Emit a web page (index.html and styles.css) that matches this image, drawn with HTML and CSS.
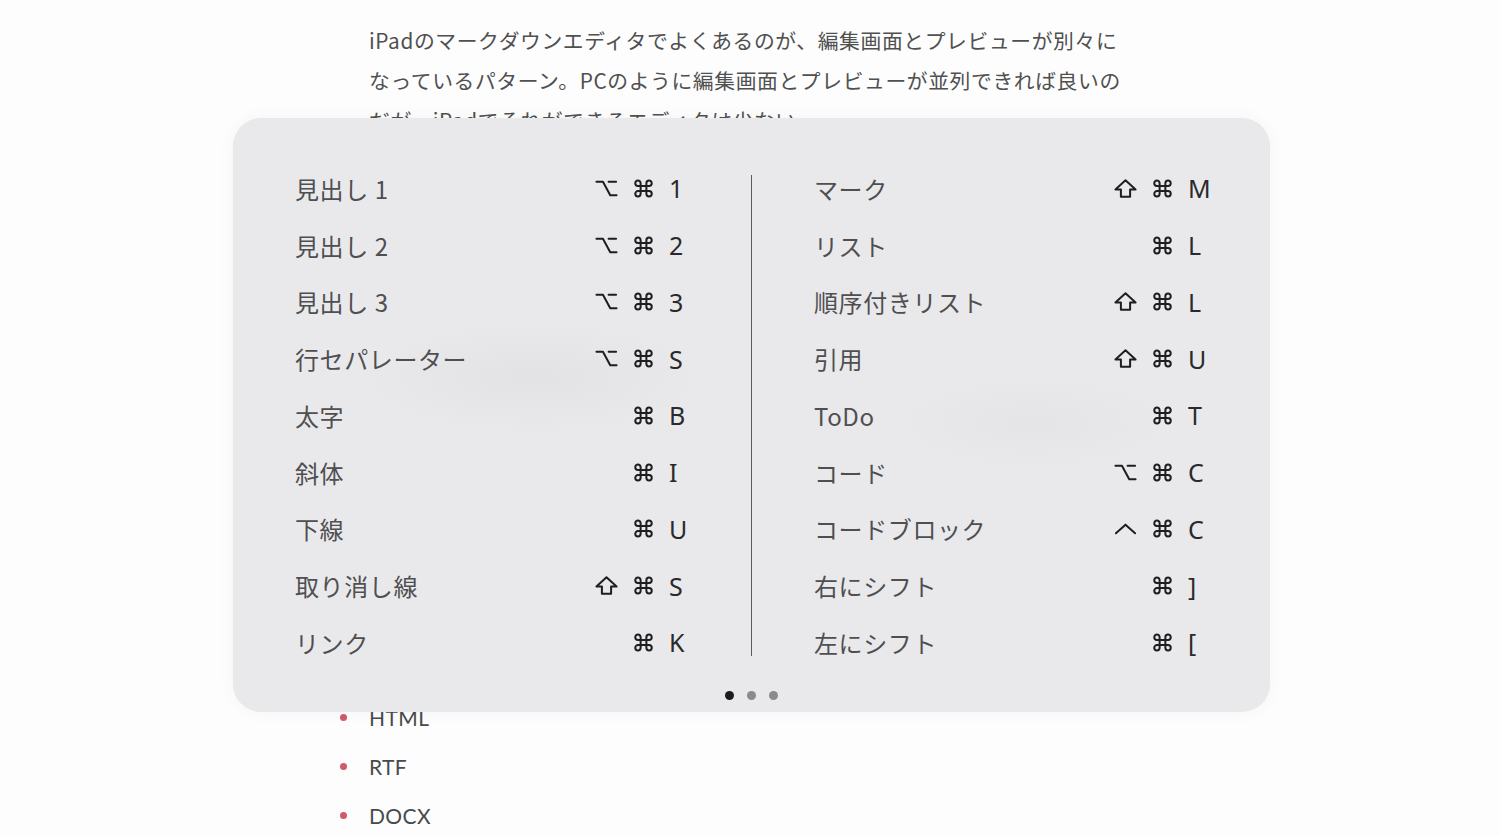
FILE: index.html
```html
<!DOCTYPE html>
<html lang="ja">
  <head>
    <meta charset="UTF-8" />
    <meta name="viewport" content="width=device-width, initial-scale=1.0" />
    <title>キーボードショートカット</title>
    <link rel="stylesheet" href="styles.css">
  </head>
  <body>
    <svg class="sprite" xmlns="http://www.w3.org/2000/svg">
      <symbol id="k-opt" viewBox="0 0 24 24">
        <path d="M1.5 5h6.8l7.6 14h6.6M14.2 5h7.8" />
      </symbol>
      <symbol id="k-cmd" viewBox="0 0 24 24">
        <path d="M15 6.5v11a2.8 2.8 0 1 0 2.8-2.8H6.2a2.8 2.8 0 1 0 2.8 2.8v-11a2.8 2.8 0 1 0-2.8 2.8h11.6a2.8 2.8 0 1 0-2.8-2.8" />
      </symbol>
      <symbol id="k-shift" viewBox="0 0 24 24">
        <path d="M7.2 20.5v-7.5H1.5L12 3.5l10.5 9.5h-5.7v7.5z" />
      </symbol>
      <symbol id="k-ctrl" viewBox="0 0 24 24">
        <path d="M2 17L12 8l10 9" />
      </symbol>
    </svg>

    <div class="doc">
      <p>iPadのマークダウンエディタでよくあるのが、編集画面とプレビューが別々に<br>なっているパターン。PCのように編集画面とプレビューが並列できれば良いの<br>だが、iPadでそれができるエディタは少ない。</p>
      <ul class="formats">
        <li>HTML</li>
        <li>RTF</li>
        <li>DOCX</li>
      </ul>
    </div>

    <div class="shortcuts">
      <div class="shortcut-grid">
        <div class="column">
          <div class="row"><span class="label">見出し 1</span><svg class="mod"><use href="#k-opt"/></svg><svg class="cmd"><use href="#k-cmd"/></svg><span class="key">1</span></div>
          <div class="row"><span class="label">見出し 2</span><svg class="mod"><use href="#k-opt"/></svg><svg class="cmd"><use href="#k-cmd"/></svg><span class="key">2</span></div>
          <div class="row"><span class="label">見出し 3</span><svg class="mod"><use href="#k-opt"/></svg><svg class="cmd"><use href="#k-cmd"/></svg><span class="key">3</span></div>
          <div class="row"><span class="label">行セパレーター</span><svg class="mod"><use href="#k-opt"/></svg><svg class="cmd"><use href="#k-cmd"/></svg><span class="key">S</span></div>
          <div class="row"><span class="label">太字</span><span></span><svg class="cmd"><use href="#k-cmd"/></svg><span class="key">B</span></div>
          <div class="row"><span class="label">斜体</span><span></span><svg class="cmd"><use href="#k-cmd"/></svg><span class="key">I</span></div>
          <div class="row"><span class="label">下線</span><span></span><svg class="cmd"><use href="#k-cmd"/></svg><span class="key">U</span></div>
          <div class="row"><span class="label">取り消し線</span><svg class="mod"><use href="#k-shift"/></svg><svg class="cmd"><use href="#k-cmd"/></svg><span class="key">S</span></div>
          <div class="row"><span class="label">リンク</span><span></span><svg class="cmd"><use href="#k-cmd"/></svg><span class="key">K</span></div>
        </div>

        <div class="divider"></div>

        <div class="column">
          <div class="row"><span class="label">マーク</span><svg class="mod"><use href="#k-shift"/></svg><svg class="cmd"><use href="#k-cmd"/></svg><span class="key">M</span></div>
          <div class="row"><span class="label">リスト</span><span></span><svg class="cmd"><use href="#k-cmd"/></svg><span class="key">L</span></div>
          <div class="row"><span class="label">順序付きリスト</span><svg class="mod"><use href="#k-shift"/></svg><svg class="cmd"><use href="#k-cmd"/></svg><span class="key">L</span></div>
          <div class="row"><span class="label">引用</span><svg class="mod"><use href="#k-shift"/></svg><svg class="cmd"><use href="#k-cmd"/></svg><span class="key">U</span></div>
          <div class="row"><span class="label">ToDo</span><span></span><svg class="cmd"><use href="#k-cmd"/></svg><span class="key">T</span></div>
          <div class="row"><span class="label">コード</span><svg class="mod"><use href="#k-opt"/></svg><svg class="cmd"><use href="#k-cmd"/></svg><span class="key">C</span></div>
          <div class="row"><span class="label">コードブロック</span><svg class="mod"><use href="#k-ctrl"/></svg><svg class="cmd"><use href="#k-cmd"/></svg><span class="key">C</span></div>
          <div class="row"><span class="label">右にシフト</span><span></span><svg class="cmd"><use href="#k-cmd"/></svg><span class="key">]</span></div>
          <div class="row"><span class="label">左にシフト</span><span></span><svg class="cmd"><use href="#k-cmd"/></svg><span class="key">[</span></div>
        </div>
      </div>

      <div class="pager">
        <span class="dot active"></span>
        <span class="dot"></span>
        <span class="dot"></span>
      </div>
    </div>
  </body>
</html>
```

FILE: styles.css
```css
/* Article page with the keyboard shortcut sheet shown on top of it. */
body {
  margin: 0;
  background-color: #fdfdfd;
  font-family: "Noto Sans CJK JP", "Noto Sans", sans-serif;
  color: #505050;
  overflow: hidden;
}

.sprite {
  display: none;
}

/* article underneath */
.doc {
  width: 762px;
  margin: 0 auto;
  padding-top: 20px;
}

.doc p {
  margin: 0;
  font-size: 20.8px;
  line-height: 40px;
  letter-spacing: 0.6px;
  white-space: nowrap;
}

/* the sheet covers the first items of this list */
.formats {
  list-style: none;
  margin: 553px 0 0 -29px;
  padding: 0;
}

.formats li {
  display: flex;
  align-items: center;
  gap: 22px;
  height: 49px;
  font-family: "Lato", "Noto Sans", sans-serif;
  font-size: 21px;
  letter-spacing: 0.4px;
  color: #4a4a4c;
}

.formats li::before {
  content: "";
  width: 7px;
  height: 7px;
  border-radius: 50%;
  background-color: #cf5a68;
}

/* shortcut sheet */
.shortcuts {
  position: absolute;
  top: 118px;
  left: 233px;
  width: 1037px;
  height: 594px;
  box-sizing: border-box;
  padding: 42px 62px 0;
  border-radius: 28px;
  background-color: #e9e9eb;
  background-image:
    radial-gradient(ellipse 170px 55px at 300px 260px, rgba(220, 220, 222, 0.5), transparent),
    radial-gradient(ellipse 140px 45px at 800px 305px, rgba(222, 222, 224, 0.4), transparent);
  box-shadow: 0 0 18px rgba(0, 0, 0, 0.04);
}

.shortcut-grid {
  display: grid;
  grid-template-columns: 1fr 1px 1fr;
  column-gap: 62px;
}

.divider {
  margin: 15px 0;
  background-color: #5c5c5e;
}

.row {
  display: grid;
  grid-template-columns: 1fr 37px 37px 20px;
  align-items: center;
  height: 56.75px;
}

.label {
  font-size: 24px;
  letter-spacing: 0.6px;
  color: #4f4f51;
  white-space: nowrap;
}

.mod,
.cmd {
  width: 23px;
  height: 23px;
  fill: none;
  stroke: #1e1e20;
  stroke-width: 2.1;
  stroke-linejoin: round;
  stroke-linecap: round;
}

.key {
  font-family: "Noto Sans", sans-serif;
  font-size: 25px;
  color: #2a2a2c;
  white-space: nowrap;
}

.pager {
  display: flex;
  justify-content: center;
  gap: 13px;
  margin-top: 20px;
}

.dot {
  width: 9px;
  height: 9px;
  border-radius: 50%;
  background-color: #8a8a8e;
}

.dot.active {
  background-color: #1c1c1e;
}
```
